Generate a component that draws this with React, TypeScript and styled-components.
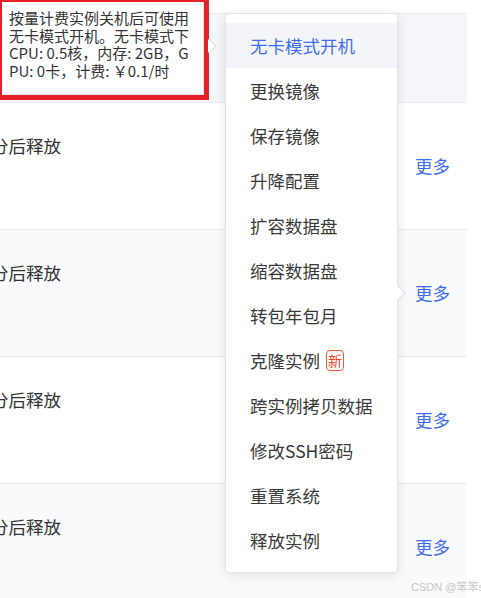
import React from "react";
import styled, { createGlobalStyle } from "styled-components";

const Global = createGlobalStyle`
  html, body { margin: 0; padding: 0; background: #fff; overflow: hidden; }
  body { font-family: "Noto Sans CJK SC", "Noto Sans", sans-serif; }
`;

const Page = styled.div`
  position: relative;
  width: 481px;
  height: 598px;
  overflow: hidden;
  background: #fff;
`;

const Table = styled.div`
  width: 467px;
  margin-top: 13px;
  border-top: 1px solid #e8eaef;
  display: flex;
  flex-direction: column;
`;

const Row = styled.div<{ $h: number; $bg: string }>`
  height: ${(p) => p.$h}px;
  box-sizing: border-box;
  border-bottom: 1px solid #e8eaef;
  background: ${(p) => p.$bg};
  display: flex;
  align-items: stretch;
  flex-shrink: 0;
`;

const MainCell = styled.div`
  flex: 1;
  padding-top: 32px;
  margin-left: -9px;
  font-size: 17.5px;
  line-height: 22px;
  color: #333;
  white-space: nowrap;
`;

const FixedCell = styled.div`
  width: 67px;
  display: flex;
  align-items: center;
  padding-left: 15px;
  box-sizing: border-box;
`;

const MoreLink = styled.span`
  font-size: 17.5px;
  color: #3f6df2;
  line-height: 22px;
`;

const Tooltip = styled.div`
  position: absolute;
  left: -2px;
  top: -2px;
  width: 206px;
  height: 97px;
  box-sizing: border-box;
  background: #fff;
  border: 1px solid #e2e4ea;
  padding: 10px 0 0 10px;
  font-size: 15px;
  line-height: 17.7px;
  color: #333;
  z-index: 3;
`;

const TipLine = styled.div`
  white-space: nowrap;
`;

const Annotation = styled.div`
  position: absolute;
  left: -3px;
  top: -3px;
  width: 212px;
  height: 103px;
  box-sizing: border-box;
  border: 5px solid #e8202a;
  z-index: 4;
`;

const Arrow = styled.div<{ $left: number; $top: number }>`
  position: absolute;
  left: ${(p) => p.$left}px;
  top: ${(p) => p.$top}px;
  width: 0;
  height: 0;
  border-top: 8px solid transparent;
  border-bottom: 8px solid transparent;
  border-left: 8px solid #e2e4ea;
  z-index: 5;
  &::after {
    content: "";
    position: absolute;
    left: -9px;
    top: -7px;
    border-top: 7px solid transparent;
    border-bottom: 7px solid transparent;
    border-left: 7px solid #fff;
  }
`;

const Menu = styled.div`
  position: absolute;
  left: 225px;
  top: 13px;
  width: 173px;
  height: 560px;
  box-sizing: border-box;
  background: #fff;
  border: 1px solid #e2e4ea;
  border-radius: 4px;
  box-shadow: 0 2px 12px rgba(0, 0, 0, 0.1);
  padding: 9px 0;
  display: flex;
  flex-direction: column;
  z-index: 2;
`;

const MenuItem = styled.div<{ $active?: boolean }>`
  height: 45px;
  flex-shrink: 0;
  display: flex;
  align-items: center;
  padding-left: 24px;
  font-size: 17.5px;
  color: ${(p) => (p.$active ? "#3f6df2" : "#3a3a3a")};
  background: ${(p) => (p.$active ? "#f3f5f9" : "transparent")};
  white-space: nowrap;
`;

const NewBadge = styled.span`
  margin-left: 6px;
  width: 18px;
  height: 21px;
  box-sizing: border-box;
  border: 1px solid #f2583a;
  border-radius: 4px;
  color: #f0442a;
  font-size: 14px;
  line-height: 19px;
  display: inline-flex;
  align-items: center;
  justify-content: center;
`;

const Watermark = styled.div`
  position: absolute;
  left: 411px;
  top: 578px;
  font-size: 11px;
  color: #c8c8c8;
  white-space: nowrap;
  font-family: "Liberation Sans", "Noto Sans CJK SC", sans-serif;
`;

const rows = [
  { h: 89, bg: "#f5f6f9", text: "", more: false },
  { h: 127, bg: "#ffffff", text: "分后释放", more: true },
  { h: 127, bg: "#f9fafc", text: "分后释放", more: true },
  { h: 127, bg: "#ffffff", text: "分后释放", more: true },
  { h: 127, bg: "#f9fafc", text: "分后释放", more: true },
];

const items = [
  "无卡模式开机",
  "更换镜像",
  "保存镜像",
  "升降配置",
  "扩容数据盘",
  "缩容数据盘",
  "转包年包月",
  "克隆实例",
  "跨实例拷贝数据",
  "修改SSH密码",
  "重置系统",
  "释放实例",
];

export default function App() {
  return (
    <Page>
      <Global />
      <Table>
        {rows.map((r, i) => (
          <Row key={i} $h={r.h} $bg={r.bg}>
            <MainCell>{r.text}</MainCell>
            <FixedCell>{r.more && <MoreLink>更多</MoreLink>}</FixedCell>
          </Row>
        ))}
      </Table>

      <Menu>
        {items.map((t, i) => (
          <MenuItem key={t} $active={i === 0}>
            {t}
            {t === "克隆实例" && <NewBadge>新</NewBadge>}
          </MenuItem>
        ))}
      </Menu>
      <Arrow $left={398} $top={285} />

      <Tooltip>
        <TipLine>按量计费实例关机后可使用</TipLine>
        <TipLine>无卡模式开机。无卡模式下</TipLine>
        <TipLine>CPU: 0.5核，内存: 2GB，G</TipLine>
        <TipLine>PU: 0卡，计费: ￥0.1/时</TipLine>
      </Tooltip>
      <Arrow $left={209} $top={38} />
      <Annotation />

      <Watermark>CSDN @笨笨sg</Watermark>
    </Page>
  );
}
